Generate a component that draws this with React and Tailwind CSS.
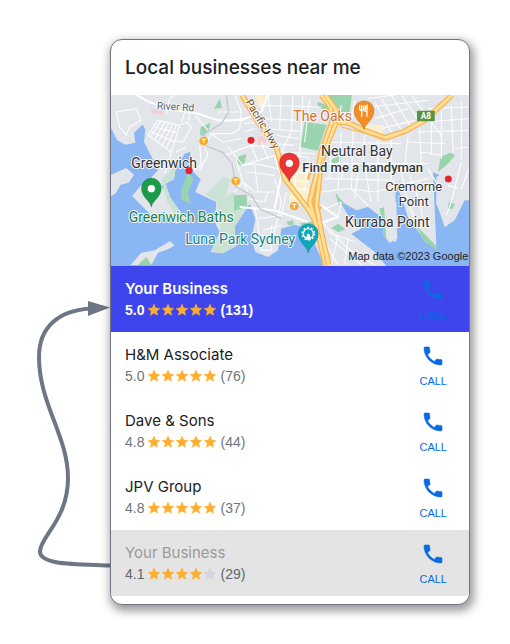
import React from 'react';

const businesses = [
  { id: 1, name: 'Your Business', rating: 5.0, reviews: 131, variant: 'active' },
  { id: 2, name: 'H&M Associate', rating: 5.0, reviews: 76, variant: 'default' },
  { id: 3, name: 'Dave & Sons', rating: 4.8, reviews: 44, variant: 'default' },
  { id: 4, name: 'JPV Group', rating: 4.8, reviews: 37, variant: 'default' },
  { id: 5, name: 'Your Business', rating: 4.1, reviews: 29, variant: 'muted' },
];

const rowStyles = {
  active: 'bg-[#3e45ec]',
  default: 'bg-white',
  muted: 'bg-[#e4e4e4]',
};

const nameStyles = {
  active: 'font-semibold text-white',
  default: 'text-[#202124]',
  muted: 'text-[#9b9b9b]',
};

const ratingStyles = {
  active: 'font-bold text-white',
  default: 'text-[#70757a]',
  muted: 'text-[#62676c]',
};

// Minor streets
const streets = [
  // Greenwich and Northwood
  'M25 60 L85 50 L100 85 L65 105 L55 130 L35 105 Z',
  'M150 85 L215 100 L190 180 L120 130 Z',
  'M158 88 L128 134 M170 91 L140 144 M182 94 L150 152 M194 97 L162 162 M205 99 L174 172',
  'M140 105 L205 122 M132 120 L198 150',
  'M215 100 L235 90 L250 105 L225 150 L195 145 M190 180 L170 245 M205 180 L235 165',
  'M175 65 L185 20 L200 9 M230 62 L220 90 M245 62 L240 90',
  // around the station
  'M290 160 L310 125 L370 125 L395 110 L400 60 L380 9 M262 70 L300 115 M310 125 L345 150 L400 140',
  'M275 160 L280 220 L255 235 M290 160 L300 190 L275 235 M340 90 L425 75 M330 60 L400 60',
  'M360 165 L405 220 L500 190 M350 190 L430 160 L490 165 M385 205 L405 270 L380 300',
  'M405 220 L440 215 L510 230 M430 160 L450 210 M460 150 L480 200 M410 120 L440 110 M410 95 L450 90',
  'M415 240 L500 250 M405 270 L440 300 L500 300 M420 300 L405 270 M440 220 L450 300',
  'M480 300 L470 330 L420 320 M500 260 L520 330 L490 460 M450 380 L520 370 M465 415 L520 400',
  'M440 345 L450 400 L460 475 L490 475 L490 400 M440 430 L490 430',
  // North Sydney
  'M480 9 L490 90 M520 9 L515 110 M555 9 L550 120 L520 180 M585 9 L575 200 M605 20 L590 150',
  'M455 40 L640 45 M470 80 L570 85 M475 110 L575 118 M505 130 L570 140 M520 180 L620 185 M505 155 L560 160',
  'M535 190 L600 195 L590 300 M560 240 L610 245 M555 265 L605 270 M550 290 L600 295 M545 315 L590 318',
  'M570 180 L560 300 M535 300 L520 370',
  // Neutral Bay
  'M670 130 L665 260 M700 120 L690 290 M735 120 L730 290 L780 340 M770 130 L765 200 L790 330',
  'M810 145 L810 330 M850 145 L850 280 M900 130 L890 230 M935 110 L940 230 M650 150 L880 155',
  'M640 215 L960 215 M650 260 L860 265 M640 300 L720 290 L800 300 L860 285 M750 240 L740 320 M710 225 L700 260',
  'M880 240 L900 330 L920 380 M905 250 L935 330 L945 380 M870 280 L960 260 M880 320 L950 330 M960 230 L990 280',
  // Cremorne
  'M690 90 L700 40 M740 25 L730 90 M790 45 L960 25 M800 80 L900 50 M820 110 L920 85 M850 9 L905 100',
  'M880 9 L935 90 M910 9 L1000 130 M800 30 L850 120 M820 20 L880 115 M780 20 L860 9',
  'M960 50 L1083 45 M950 90 L1083 80 M930 120 L1083 115 M900 150 L1010 155 M1000 30 L1000 200 M1030 40 L1035 180 M1060 30 L1060 200',
  'M970 90 L970 190 M940 180 L1000 190 M1040 170 L1083 165 M1060 210 L1030 330 L1015 370 M1083 230 L1060 290 M1020 280 L1050 290',
  // Kirribilli
  'M640 390 L720 470 L800 519 M665 440 L760 519 M650 450 L690 519 M690 430 L670 519 M720 440 L710 519',
  'M640 390 L690 375 L700 330 M650 350 L700 330 M660 420 L740 450',
];

const mainRoads = [
  'M85 9 L120 28 L180 52 L260 62 L330 85 L400 85 L460 60 L480 9',
  'M395 345 L500 355 L600 390',
  'M500 190 L520 250 L500 350',
  'M640 340 L690 375 L640 395',
];

const highways = [
  'M402 9 L450 90 L505 165 L530 260 L600 350 L640 420 L662 519',
  'M640 9 L668 45 L672 90 L640 180 L625 250 L605 330 L625 400 L652 519',
  'M652 9 L682 50 L685 90 L660 150 L640 210 L625 340 L640 420',
  'M670 88 L720 92 L770 115 L830 138 L890 118 L950 85 L1010 30 L1032 9',
];

const MapPin = ({ x, y, color, children }) => (
  <g transform={`translate(${x} ${y})`}>
    <path
      d="M0 0 C-3 -20 -30 -30 -30 -58 A30 30 0 0 1 30 -58 C30 -30 3 -20 0 0 Z"
      fill={color}
      stroke="#00000030"
      strokeWidth="2"
    />
    {children || <circle cx="0" cy="-56" r="11" fill="#fff" />}
  </g>
);

const MapLabel = ({ children, size = 42, color = '#333', ...rest }) => (
  <text
    fontSize={size}
    fill={color}
    stroke="#f6f8fa"
    strokeWidth="6"
    strokeLinejoin="round"
    paintOrder="stroke"
    {...rest}
  >
    {children}
  </text>
);

const AreaMap = () => (
  <svg
    className="block h-[171px] w-full font-['Roboto',sans-serif]"
    viewBox="9 9 1074 513"
    preserveAspectRatio="xMidYMid slice"
    role="img"
    aria-label="Map of nearby businesses"
  >
    <rect x="0" y="0" width="1100" height="530" fill="#e2e5e9" />

    {/* Water */}
    <g fill="#8bb6f4">
      <path d="M9 108 L28 145 L52 158 L82 152 L78 122 L104 98 L112 112 L108 150 L128 190 L150 232 L200 235 L230 185 L246 180 L256 240 L278 262 L262 300 L325 330 L320 390 L335 420 L308 480 L345 484 L385 462 L380 405 L425 335 L442 380 L430 440 L442 480 L480 495 L510 475 L520 410 L560 398 L600 410 L650 522 L9 522 Z" />
      <path d="M684 308 L710 335 L745 355 L780 345 L820 375 L835 440 L865 450 L868 330 L900 375 L960 460 L1010 495 L1083 522 L835 522 L800 480 L730 425 L760 410 L720 370 Z" />
      <path d="M862 285 L872 270 L900 380 L955 450 L985 462 L975 240 L995 250 L985 330 L1010 405 L1040 385 L1070 325 L1083 325 L1083 522 L960 522 L880 470 L865 430 Z" />
    </g>

    {/* Headlands */}
    <g fill="#e2e5e9">
      <path d="M9 248 L55 228 L78 248 L62 272 L38 278 L22 305 L9 312 Z" />
      <path d="M150 190 L205 215 L198 262 L160 282 L188 318 L235 385 L205 395 L170 360 L130 370 L72 312 L100 280 L125 262 L150 235 Z" />
      <path d="M68 519 L100 482 L140 475 L185 448 L200 460 L180 472 L150 482 L130 519 Z" />
      <path d="M815 340 L865 330 L868 440 L845 452 L828 432 Z" />
      <path d="M870 290 L950 300 L975 420 L985 470 L945 440 L900 370 Z" />
      <path d="M985 255 L1083 200 L1083 310 L1050 345 L1015 405 L985 335 Z" />
    </g>

    {/* Parks */}
    <g fill="#9ad4ae">
      <path d="M590 90 L656 98 L630 176 L576 165 Z" />
      <path d="M640 9 L732 9 L725 60 L685 62 L672 40 Z" />
      <path d="M628 30 L660 40 L668 60 L630 45 Z" />
      <path d="M318 50 L335 20 L342 48 Z" />
      <path d="M276 128 L278 106 L308 92 L300 120 L284 132 Z" />
      <path d="M386 215 L390 195 L415 185 L410 212 L400 220 Z" />
      <path d="M668 205 L700 190 L698 208 L675 216 Z" />
      <path d="M218 300 L240 240 L256 262 L240 300 L248 338 L220 320 Z" />
      <path d="M378 310 L415 308 L418 345 L378 358 Z" />
      <path d="M990 240 L998 195 L1025 182 L1042 190 L1020 215 Z" />
      <path d="M90 519 L115 494 L130 519 Z" />
      <path d="M682 300 L712 345 L690 335 Z M670 408 L690 395 L712 412 L690 420 Z" />
      <path d="M536 390 L556 384 L556 398 L540 400 Z M575 394 L625 388 L630 405 L580 402 Z" />
      <path d="M815 350 L828 345 L835 440 L828 435 Z M920 395 L985 462 L990 475 L950 450 Z" />
      <path d="M1022 330 L1040 335 L1035 350 L1020 350 Z" />
    </g>
    <g fill="#c9e2d3">
      <path d="M300 300 L345 255 L368 262 L360 290 L345 325 L330 330 L290 305 Z" />
      <path d="M325 330 L378 300 L378 358 L418 345 L380 405 L382 462 L345 484 L310 478 L338 420 Z" />
      <path d="M172 272 L198 262 L205 215 L195 205 L185 240 L160 262 L178 330 L215 392 L235 385 L188 318 Z" />
    </g>
    <path d="M448 135 L468 132 L476 150 L450 162 Z M128 48 L170 58 L160 68 L132 64 Z" fill="#f5cfd0" />
    <path d="M550 215 L610 220 L600 330 L545 330 Z M750 95 L830 100 L820 130 L770 125 Z M440 9 L475 9 L470 50 L452 45 Z" fill="#fbefcf" />

    {/* Streets */}
    <g fill="none" stroke="#fbfcfd" strokeWidth="3.5" strokeLinejoin="round">
      {streets.map((d) => (
        <path key={d} d={d} />
      ))}
    </g>
    <g fill="none" stroke="#fff" strokeWidth="6" strokeLinejoin="round">
      {mainRoads.map((d) => (
        <path key={d} d={d} />
      ))}
    </g>
    {/* Railway */}
    <path
      d="M355 9 L362 60 L340 95 L290 125 L290 160 L345 182 L372 215 L385 285 L430 310 L455 350 L520 380"
      fill="none"
      stroke="#c5c9ce"
      strokeWidth="4"
    />
    <g fill="none" stroke="#f9b450" strokeWidth="17" strokeLinejoin="round">
      {highways.map((d) => (
        <path key={d} d={d} />
      ))}
      <path d="M600 262 L612 225 M632 345 L640 350" strokeWidth="8" />
    </g>
    <g fill="none" stroke="#ffe09a" strokeWidth="9" strokeLinejoin="round">
      {highways.map((d) => (
        <path key={d} d={d} />
      ))}
    </g>
    <path
      d="M668 75 L700 105 L765 122 L830 140 M645 9 L675 50 L678 90 L650 165 L615 330 L655 519"
      fill="none"
      stroke="#f9b450"
      strokeWidth="3"
    />

    {/* Stations */}
    {[[287, 147], [383, 267], [559, 342]].map(([x, y]) => (
      <g key={x}>
        <circle cx={x} cy={y} r="13" fill="#f9a825" />
        <path d={`M${x - 6} ${y - 5} H${x + 6} M${x} ${y - 5} V${y + 7}`} stroke="#fff" strokeWidth="3.5" />
      </g>
    ))}

    {/* Labels */}
    <MapLabel x="146" y="52" size={31} color="#5f6368" transform="rotate(3 146 52)">River Rd</MapLabel>
    <MapLabel x="412" y="30" size={32} color="#7a4f22" transform="rotate(59 412 30)">Pacific Hwy</MapLabel>
    <MapLabel x="70" y="229">Greenwich</MapLabel>
    <MapLabel x="62" y="391" color="#188048">Greenwich Baths</MapLabel>
    <MapLabel x="232" y="456" color="#14868c">Luna Park Sydney</MapLabel>
    <MapLabel x="556" y="87" color="#d5702c">The Oaks</MapLabel>
    <MapLabel x="639" y="191">Neutral Bay</MapLabel>
    <MapLabel x="583" y="241" size={39} fontWeight="500">Find me a handyman</MapLabel>
    <MapLabel x="917" y="297" size={39} textAnchor="middle">Cremorne</MapLabel>
    <MapLabel x="917" y="342" size={39} textAnchor="middle">Point</MapLabel>
    <MapLabel x="711" y="406">Kurraba Point</MapLabel>

    <rect x="927" y="56" width="53" height="32" rx="2" fill="#549442" />
    <text x="953.5" y="81" fontSize="25" fontWeight="700" fill="#fff" textAnchor="middle">A8</text>

    {[[243, 236], [429, 145], [1021, 261]].map(([x, y]) => (
      <circle key={x} cx={x} cy={y} r="10" fill="#e5252a" stroke="#c81e23" />
    ))}
    <MapPin x={130} y={346} color="#1a9c4a" />
    <MapPin x={544} y={270} color="#ea3535" />
    <MapPin x={768} y={114} color="#f58b22">
      <path
        d="M-13 -74 V-64 Q-13 -59 -7 -59 Q-1 -59 -1 -64 V-74 M-7 -74 V-40 M9 -40 V-74 Q3 -71 3 -56 H9"
        fill="none"
        stroke="#fff"
        strokeWidth="4"
      />
    </MapPin>
    <MapPin x={601} y={483} color="#0fa8b8">
      <circle cy="-58" r="15" fill="none" stroke="#fff" strokeWidth="4" />
      <circle cy="-58" r="19" fill="none" stroke="#fff" strokeWidth="4" strokeDasharray="5 7" />
      <path d="M-3 -58 H3 L8 -40 H-8 Z" fill="#fff" />
    </MapPin>

    <text x="1081" y="504" fontSize="33" fill="#222" textAnchor="end" className="font-['Liberation_Sans',sans-serif]">
      Map data ©2023 Google
    </text>
  </svg>
);

const Stars = ({ rating }) => (
  <span className="flex" aria-hidden="true">
    {[1, 2, 3, 4, 5].map((n) => (
      <svg
        key={n}
        className={`size-[14px] ${n <= Math.round(rating) ? 'text-[#fdae2e]' : 'text-[#d3d6dc]'}`}
        viewBox="0 0 24 24"
        fill="currentColor"
        stroke="currentColor"
        strokeWidth="1"
      >
        <path d="M12 17.27L18.18 21l-1.64-7.03L22 9.24l-7.19-.61L12 2 9.190 8.630 2 9.240l5.460 4.730L5.820 21z" />
      </svg>
    ))}
  </span>
);

const PhoneIcon = () => (
  <svg
    className="size-6"
    viewBox="0 0 24 24"
    fill="currentColor"
    stroke="currentColor"
    strokeWidth="0.6"
    aria-hidden="true"
  >
    <path d="M6.62 10.79c1.44 2.83 3.76 5.14 6.59 6.59l2.2-2.2c.27-.27.67-.36 1.02-.24 1.12.37 2.33.57 3.57.57.55 0 1 .45 1 1V20c0 .55-.45 1-1 1-9.390 0-17-7.610-17-17 0-.55.45-1 1-1h3.500c.55 0 1 .45 1 1 0 1.250.2 2.450.57 3.570.11.35.03.74-.25 1.020l-2.200 2.200z" />
  </svg>
);

const BusinessRow = ({ business }) => {
  const { name, rating, reviews, variant } = business;

  return (
    <li className={`flex h-[66px] items-start justify-between pr-[22px] pl-[14px] ${rowStyles[variant]}`}>
      <div className="pt-3">
        <h2 className={`font-['Inter',sans-serif] text-[15px] leading-[22px] ${nameStyles[variant]}`}>{name}</h2>
        <div className={`flex items-center gap-[3px] text-sm leading-5 ${ratingStyles[variant]}`}>
          <span>{rating.toFixed(1)}</span>
          <Stars rating={rating} />
          <span>({reviews})</span>
        </div>
      </div>
      <button type="button" className="flex flex-col items-center pt-3 text-[#0b69e3]">
        <PhoneIcon />
        <span className="mt-[5px] text-[11px] leading-4">CALL</span>
      </button>
    </li>
  );
};

// Curve that leads from the last row up to the first one
const RankArrow = () => (
  <svg className="h-[565px] w-[110px] shrink-0" viewBox="0 0 110 565" fill="none" aria-hidden="true">
    <path
      d="M110 526.5 C75 525 39 526 40 512 C41 497 68 480 68 439 C68 397 39 365 39 318 C39 288 58 272 90 269.5"
      stroke="#6e7584"
      strokeWidth="4"
    />
    <path d="M88 262 L110 268.5 L88 277 Z" fill="#6e7584" />
  </svg>
);

const App = () => (
  <main className="flex min-h-screen items-start bg-white pt-[39px] pr-10 pb-10 font-['Liberation_Sans',Arial,sans-serif]">
    <RankArrow />
    <section className="min-w-0 flex-1 overflow-hidden rounded-xl border border-[#6e7584] bg-white pb-2 shadow-[2px_4px_10px_2px_rgba(0,0,0,0.4)]">
      <h1 className="px-[14px] py-[13px] font-['Inter',sans-serif] text-[19px] leading-[29px] font-medium text-[#202124]">
        Local businesses near me
      </h1>
      <AreaMap />
      <ul>
        {businesses.map((business) => (
          <BusinessRow key={business.id} business={business} />
        ))}
      </ul>
    </section>
  </main>
);

export default App;
